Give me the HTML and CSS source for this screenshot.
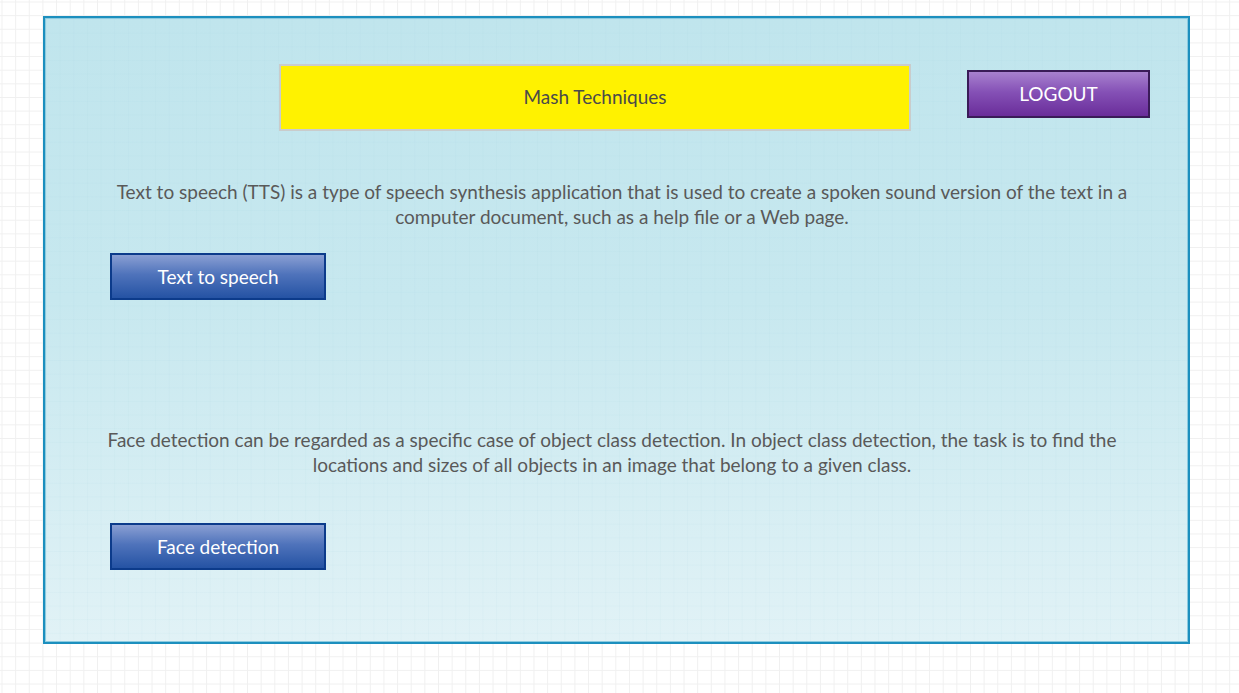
FILE: index.html
```html
<!DOCTYPE html>
<html>
<head>
<meta charset="utf-8">
<link rel="stylesheet" href="styles.css">
</head>
<body>
<div class="panel">
  <div class="header">
    <div class="title">Mash Techniques</div>
    <button class="logout">LOGOUT</button>
  </div>
  <p class="desc desc-tts">Text to speech (TTS) is a type of speech synthesis application that is used to create a spoken sound version of the text in a<br>computer document, such as a help file or a Web page.</p>
  <button class="action action-tts">Text to speech</button>
  <p class="desc desc-face">Face detection can be regarded as a specific case of object class detection. In object class detection, the task is to find the<br>locations and sizes of all objects in an image that belong to a given class.</p>
  <button class="action action-face">Face detection</button>
</div>
</body>
</html>
```
FILE: styles.css
```css
html, body {
  margin: 0;
  padding: 0;
}
body {
  width: 1239px;
  height: 693px;
  overflow: hidden;
  font-family: Lato, "Open Sans", sans-serif;
  background-color: #ffffff;
  background-image:
    linear-gradient(to right, #f0f0f0 1px, transparent 1px),
    linear-gradient(to bottom, #f0f0f0 1px, transparent 1px);
  background-size: 13.65px 13.65px;
  background-position: 1.5px 1.5px;
}
.panel {
  box-sizing: border-box;
  margin: 16px 0 0 43px;
  width: 1147px;
  height: 628px;
  border: 2px solid #1c8fbe;
  box-shadow: inset 0 0 0 1px #8ccbe0;
  background:
    linear-gradient(to right, rgba(150,200,215,0.07) 1px, transparent 1px) 1px 1px / 13.65px 13.65px,
    linear-gradient(to bottom, rgba(150,200,215,0.07) 1px, transparent 1px) 1px 1px / 13.65px 13.65px,
    linear-gradient(to bottom, #c0e5ed 0%, #c7e8ef 45%, #e1f2f6 100%);
  display: flex;
  flex-direction: column;
  align-items: flex-start;
}
.header {
  display: flex;
  align-items: flex-start;
  margin-top: 46px;
  padding-left: 234px;
  gap: 56px;
}
.title {
  box-sizing: border-box;
  width: 632px;
  height: 67px;
  background: #fff200;
  border: 2px solid #c9cccc;
  color: #4a4a4a;
  font-size: 19px;
  display: flex;
  align-items: center;
  justify-content: center;
  padding-bottom: 3px;
}
.logout {
  box-sizing: border-box;
  margin-top: 6px;
  width: 183px;
  height: 48px;
  border: 2px solid #3a1b58;
  background: linear-gradient(to bottom, #a881cf 0%, #8551b6 45%, #6a2d9a 100%);
  color: #ffffff;
  font-family: Lato, sans-serif;
  font-size: 19px;
  padding: 0 0 2px;
  cursor: pointer;
}
.desc {
  margin: 0;
  font-size: 19px;
  line-height: 25px;
  color: #595959;
  text-align: center;
  white-space: nowrap;
}
.desc-tts {
  margin-top: 48px;
  align-self: stretch;
  padding-left: 11px;
}
.desc-face {
  margin-top: 127px;
  align-self: stretch;
  padding-right: 9px;
}
.action {
  box-sizing: border-box;
  margin-left: 65px;
  width: 216px;
  height: 47px;
  border: 2px solid #0c3b8b;
  background: linear-gradient(to bottom, #8a9fd3 0%, #4f73bb 45%, #2553a4 100%);
  color: #ffffff;
  font-family: Lato, sans-serif;
  font-size: 19px;
  padding: 0 0 1px;
  cursor: pointer;
}
.action-tts {
  margin-top: 24px;
}
.action-face {
  margin-top: 46px;
}
```
